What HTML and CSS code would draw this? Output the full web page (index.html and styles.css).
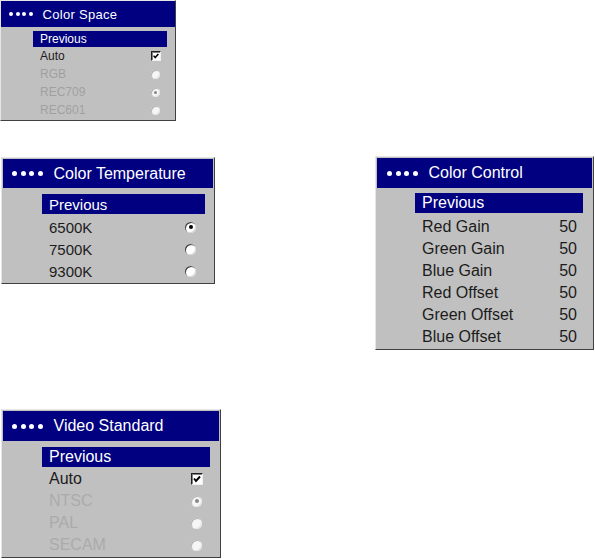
FILE: index.html
```html
<!doctype html>
<html lang="en">
  <head>
    <meta charset="UTF-8" />
    <title>OSD Menus</title>
    <link rel="stylesheet" href="styles.css">
  </head>
  <body>
    <div class="sheet">
      <div class="osd osd-space">
        <div class="osd-title"><span class="dots"><i></i><i></i><i></i><i></i></span>Color Space</div>
        <ul class="osd-list">
          <li class="sel">Previous</li>
          <li>Auto <span class="check"><svg viewBox="0 0 10 10"><polyline points="2,4.5 4,7 8,2.5" /></svg></span></li>
          <li class="off">RGB <span class="radio"></span></li>
          <li class="off">REC709 <span class="radio on"></span></li>
          <li class="off">REC601 <span class="radio"></span></li>
        </ul>
      </div>

      <div class="pair">
        <div class="osd osd-temp">
          <div class="osd-title"><span class="dots"><i></i><i></i><i></i><i></i></span>Color Temperature</div>
          <ul class="osd-list">
            <li class="sel">Previous</li>
            <li>6500K <span class="radio on"></span></li>
            <li>7500K <span class="radio"></span></li>
            <li>9300K <span class="radio"></span></li>
          </ul>
        </div>

        <div class="osd osd-control">
          <div class="osd-title"><span class="dots"><i></i><i></i><i></i><i></i></span>Color Control</div>
          <ul class="osd-list">
            <li class="sel">Previous</li>
            <li>Red Gain <span class="val">50</span></li>
            <li>Green Gain <span class="val">50</span></li>
            <li>Blue Gain <span class="val">50</span></li>
            <li>Red Offset <span class="val">50</span></li>
            <li>Green Offset <span class="val">50</span></li>
            <li>Blue Offset <span class="val">50</span></li>
          </ul>
        </div>
      </div>

      <div class="osd osd-video">
        <div class="osd-title"><span class="dots"><i></i><i></i><i></i><i></i></span>Video Standard</div>
        <ul class="osd-list">
          <li class="sel">Previous</li>
          <li>Auto <span class="check"><svg viewBox="0 0 10 10"><polyline points="2,4.5 4,7 8,2.5" /></svg></span></li>
          <li class="off">NTSC <span class="radio on"></span></li>
          <li class="off">PAL <span class="radio"></span></li>
          <li class="off">SECAM <span class="radio"></span></li>
        </ul>
      </div>
    </div>
  </body>
</html>
```

FILE: styles.css
```css
body {
  margin: 0;
  background: #fff;
  font-family: "Liberation Sans", Arial, sans-serif;
}
.sheet {
  display: flex;
  flex-direction: column;
  align-items: flex-start;
  width: 595px;
}
.pair {
  display: flex;
  align-items: flex-start;
  justify-content: space-between;
  width: 594px;
  margin-top: 35px;
}
.osd {
  box-sizing: border-box;
  background: #c0c0c0;
  border: 1px solid;
  border-color: #e6e6e6 #404040 #404040 #e6e6e6;
  padding: 1px;
}
.osd-title {
  display: flex;
  align-items: center;
  background: #000080;
  color: #fff;
}
.dots {
  display: flex;
}
.dots i {
  display: block;
  border-radius: 50%;
  background: #fff;
}
.osd-list {
  list-style: none;
  margin: 0;
  display: flex;
  flex-direction: column;
}
.osd-list li {
  display: flex;
  align-items: center;
  justify-content: space-between;
  color: #1c1c1c;
}
.osd-list li.sel {
  background: #000080;
  color: #fff;
}
.osd-list li.off {
  color: #a0a0a0;
}

/* controls */
.check {
  box-sizing: border-box;
  background: #fff;
  border: 1px solid;
  border-color: #202020 #f0f0f0 #f0f0f0 #202020;
  box-shadow: inset 1px 1px 0 #808080;
  display: flex;
}
.check svg {
  width: 100%;
  height: 100%;
}
.check polyline {
  fill: none;
  stroke: #000;
  stroke-width: 1.9;
}
.radio {
  position: relative;
  border-radius: 50%;
  background: #fff;
  box-shadow: inset 1px 1px 0 #404040, inset -1px -1px 0 #d8d8d8;
}
.radio.on::after {
  content: "";
  position: absolute;
  left: 50%;
  top: 50%;
  width: 4px;
  height: 4px;
  margin: -2px 0 0 -2px;
  border-radius: 50%;
  background: #000;
}
.off .radio {
  background: #f6f6f6;
  box-shadow: inset 1px 1px 0 #b4b4b4, inset -1px -1px 0 #e4e4e4;
}
.off .radio.on::after {
  background: #888;
}

/* Color Space */
.osd-space {
  width: 176px;
  padding: 0;
}
.osd-space .osd-title {
  height: 26px;
  padding-left: 8px;
  font-size: 13px;
  letter-spacing: 0.3px;
}
.osd-space .dots {
  gap: 2.5px;
  margin-right: 10px;
}
.osd-space .dots i {
  width: 4px;
  height: 4px;
}
.osd-space .osd-list {
  padding: 4px 8px 1px 32px;
  font-size: 12px;
}
.osd-space li {
  height: 18px;
  padding: 0 6px 0 7px;
}
.osd-space li.sel {
  height: 16px;
}
.osd-space .check {
  width: 10px;
  height: 10px;
}
.osd-space .radio {
  width: 9px;
  height: 9px;
  margin-right: 1px;
}
.osd-space .radio.on::after {
  width: 3px;
  height: 3px;
  margin: -1.5px 0 0 -1.5px;
}

/* Color Temperature */
.osd-temp {
  width: 214px;
  margin: 1px 0 0 1px;
}
.osd-temp .osd-title {
  height: 29px;
  padding-left: 9px;
  font-size: 16px;
}
.osd-temp .osd-list {
  padding: 6px 8px 0 39px;
  font-size: 15px;
}
.osd-temp li {
  height: 22px;
  padding: 0 9px 0 7px;
}
.osd-temp li.sel {
  height: 20px;
  margin-bottom: 2px;
}
.osd-temp .radio {
  width: 11px;
  height: 11px;
}

/* Color Control */
.osd-control {
  width: 219px;
}
.osd-control .osd-title {
  height: 30px;
  padding-left: 10px;
  font-size: 16px;
}
.osd-control .osd-list {
  padding: 5px 9px 0 38px;
  font-size: 16px;
}
.osd-control li {
  height: 22px;
  padding: 0 6px 0 7px;
}
.osd-control li.sel {
  height: 20px;
  margin-bottom: 3px;
}

/* Video Standard */
.osd-video {
  width: 220px;
  margin: 59px 0 0 1px;
}
.osd-video .osd-title {
  height: 30px;
  padding-left: 9px;
  font-size: 16px;
}
.osd-video .osd-list {
  padding: 6px 9px 0 39px;
  font-size: 16px;
}
.osd-video li {
  height: 22px;
  padding: 0 7px 0 7px;
}
.osd-video li.sel {
  height: 20px;
  margin-bottom: 1px;
}
.osd-video li.off {
  color: #ababab;
}
.osd-video .check {
  width: 12px;
  height: 12px;
}
.osd-video .radio {
  width: 11px;
  height: 11px;
  margin-right: 1px;
}

.osd-temp .dots,
.osd-control .dots,
.osd-video .dots {
  gap: 3.5px;
  margin-right: 11px;
}
.osd-temp .dots i,
.osd-control .dots i,
.osd-video .dots i {
  width: 5px;
  height: 5px;
}
```
